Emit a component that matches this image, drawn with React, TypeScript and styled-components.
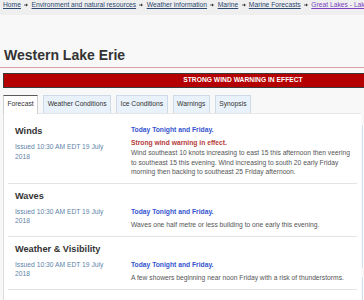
import React from 'react';
import styled, { createGlobalStyle } from 'styled-components';

const Global = createGlobalStyle`
  html, body { margin: 0; padding: 0; overflow: hidden; background: #f8f8f8; }
  body {
    font-family: "Liberation Sans", Arial, sans-serif;
    font-size: 6.72px;
    line-height: 9.7px;
    color: #333;
  }
  * { box-sizing: border-box; }
`;

const Page = styled.div`
  width: 364px;
  height: 300px;
  overflow: hidden;
`;

const Breadcrumb = styled.nav`
  width: 490px;
  height: 15px;
  background: #efefef;
  padding-left: 3px;
  display: flex;
  align-items: flex-start;
  white-space: nowrap;
`;

const Crumb = styled.a<{ $visited?: boolean }>`
  color: ${(p) => (p.$visited ? '#7b3fc0' : '#2c4770')};
  text-decoration: underline;
  cursor: pointer;
`;

const Sep = styled.span`
  display: inline-flex;
  align-items: center;
  height: 9.7px;
  margin: 0 3.3px;
  color: #333;
`;

const Content = styled.div`
  padding-left: 3px;
  width: 483px;
`;

const Title = styled.h1`
  margin: 32.2px 0 0 -3px;
  padding: 0 0 2.8px 4px;
  font-size: 14px;
  line-height: 17px;
  font-weight: bold;
  color: #333;
  border-bottom: 1px solid #d9a0a2;
`;

const Warning = styled.div`
  margin-top: 4.7px;
  height: 15.6px;
  background: #b50000;
  border: 1px solid #3a3a3a;
  border-top-width: 1.5px;
  color: #fff;
  font-weight: bold;
  text-align: center;
  line-height: 12.6px;
`;

const Columns = styled.div`
  display: flex;
  gap: 1px;
  margin-top: 6.7px;
`;

const Main = styled.div`
  width: 358px;
  flex: none;
`;

const TabList = styled.div`
  display: flex;
  gap: 5px;
  height: 18.3px;
`;

const Tab = styled.div<{ $active?: boolean }>`
  height: ${(p) => (p.$active ? '19.3px' : '18.3px')};
  padding: ${(p) => (p.$active ? '2.6px 3.5px 0' : '3.1px 3.5px 0')};
  border: 1px solid ${(p) => (p.$active ? '#cfcfcf' : '#cddbe9')};
  border-top: ${(p) => (p.$active ? '1.5px solid #5a5a5a' : '1px solid #cddbe9')};
  border-bottom: none;
  background: ${(p) => (p.$active ? '#fff' : '#e9f1fa')};
  color: #333;
  white-space: nowrap;
  cursor: pointer;
`;

const Panel = styled.div`
  background: #fff;
  border-left: 1px solid #dcdcdc;
  border-top: 1px solid #e6e6e6;
  padding-top: 5.1px;
  min-height: 200px;
`;

const Row = styled.div`
  margin: 0 4px;
  padding: 6px 4px 6px 7px;
  border-bottom: 1px solid #e3e3e3;
  display: grid;
  grid-template-columns: 100px 1fr;
  column-gap: 16px;
`;

const Left = styled.div`
  align-self: start;
  padding-bottom: 4px;
`;

const RowTitle = styled.h3`
  margin: 0 0 4.6px;
  font-size: 9.2px;
  line-height: 12px;
  font-weight: bold;
  color: #333;
`;

const Issued = styled.div`
  color: #6183a8;
`;

const Right = styled.div`
  align-self: end;
`;

const Period = styled.div`
  color: #3453cf;
  font-weight: bold;
  margin-bottom: 3.1px;
`;

const Alert = styled.div`
  color: #b53a3a;
  font-weight: bold;
`;

const Body = styled.div`
  color: #555;
`;

const Sidebar = styled.div`
  flex: 1;
  padding-top: 30px;
  display: flex;
  flex-direction: column;
  gap: 9px;
`;

const SideBox = styled.div<{ $h: number }>`
  height: ${(p) => p.$h}px;
  border-left: 1px solid #cfe1f0;
  background: #fff;
`;

const Arrow = () => (
  <svg width="4" height="4" viewBox="0 0 8 8" aria-hidden="true">
    <path d="M0 4h5" stroke="#333" strokeWidth="1.6" />
    <path d="M4 1l4 3-4 3z" fill="#333" />
  </svg>
);

const crumbs = [
  'Home',
  'Environment and natural resources',
  'Weather information',
  'Marine',
  'Marine Forecasts',
];

type Item = { title: string; alert?: string; body: string };

const rows: Item[] = [
  {
    title: 'Winds',
    alert: 'Strong wind warning in effect.',
    body:
      'Wind southeast 10 knots increasing to east 15 this afternoon then veering to southeast 15 this evening. Wind increasing to south 20 early Friday morning then backing to southeast 25 Friday afternoon.',
  },
  {
    title: 'Waves',
    body: 'Waves one half metre or less building to one early this evening.',
  },
  {
    title: 'Weather & Visibility',
    body: 'A few showers beginning near noon Friday with a risk of thunderstorms.',
  },
];

const tabs = ['Forecast', 'Weather Conditions', 'Ice Conditions', 'Warnings', 'Synopsis'];

export default function App() {
  return (
    <Page>
      <Global />
      <Breadcrumb>
        {crumbs.map((c) => (
          <React.Fragment key={c}>
            <Crumb>{c}</Crumb>
            <Sep>
              <Arrow />
            </Sep>
          </React.Fragment>
        ))}
        <Crumb $visited>Great Lakes - Lake Erie</Crumb>
      </Breadcrumb>
      <Content>
        <Title>Western Lake Erie</Title>
        <Warning>STRONG WIND WARNING IN EFFECT</Warning>
        <Columns>
          <Main>
            <TabList>
              {tabs.map((t, i) => (
                <Tab key={t} $active={i === 0}>
                  {t}
                </Tab>
              ))}
            </TabList>
            <Panel>
              {rows.map((r) => (
                <Row key={r.title}>
                  <Left>
                    <RowTitle>{r.title}</RowTitle>
                    <Issued>Issued 10:30 AM EDT 19 July 2018</Issued>
                  </Left>
                  <Right>
                    <Period>Today Tonight and Friday.</Period>
                    {r.alert && <Alert>{r.alert}</Alert>}
                    <Body>{r.body}</Body>
                  </Right>
                </Row>
              ))}
            </Panel>
          </Main>
          <Sidebar>
            <SideBox $h={143} />
            <SideBox $h={60} />
          </Sidebar>
        </Columns>
      </Content>
    </Page>
  );
}
